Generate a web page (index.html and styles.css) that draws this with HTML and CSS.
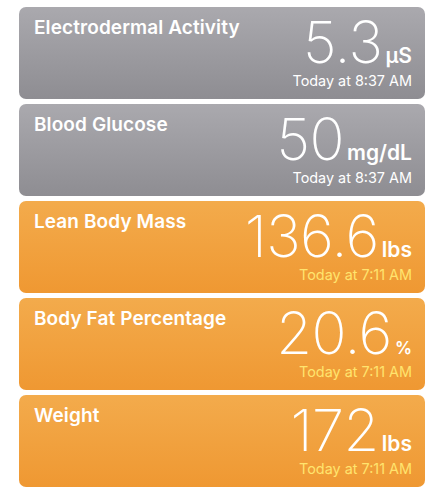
FILE: index.html
```html
<!DOCTYPE html>
<html>
<head lang="en">
    <meta charset="UTF-8">
    <title>Health</title>
    <link rel="stylesheet" href="styles.css">
</head>
<body>
<div class="list">
    <!-- gray cards -->
    <div class="card gray">
        <div class="title">Electrodermal Activity</div>
        <div class="data">
            <div class="value"><span class="num">5.3</span><span class="unit">µS</span></div>
            <div class="date">Today at 8:37 AM</div>
        </div>
    </div>
    <div class="card gray">
        <div class="title">Blood Glucose</div>
        <div class="data">
            <div class="value"><span class="num">50</span><span class="unit">mg/dL</span></div>
            <div class="date">Today at 8:37 AM</div>
        </div>
    </div>
    <!-- orange cards -->
    <div class="card orange">
        <div class="title">Lean Body Mass</div>
        <div class="data">
            <div class="value"><span class="num">136.6</span><span class="unit">lbs</span></div>
            <div class="date">Today at 7:11 AM</div>
        </div>
    </div>
    <div class="card orange">
        <div class="title">Body Fat Percentage</div>
        <div class="data">
            <div class="value"><span class="num">20.6</span><span class="unit pct">%</span></div>
            <div class="date">Today at 7:11 AM</div>
        </div>
    </div>
    <div class="card orange">
        <div class="title">Weight</div>
        <div class="data">
            <div class="value"><span class="num">172</span><span class="unit">lbs</span></div>
            <div class="date">Today at 7:11 AM</div>
        </div>
    </div>
</div>
</body>
</html>
```

FILE: styles.css
```css
*{ margin:0; padding:0; box-sizing:border-box; }
body{ background:#fff; font-family: Inter, "Noto Sans", sans-serif; color:#fff; }
.list{ display:flex; flex-direction:column; gap:5px; padding:7px 19px 0 19px; }
.card{ height:92px; border-radius:7px; display:flex; justify-content:space-between; padding:10px 13px 0 15px; }
.gray{ background:linear-gradient(#aaa9ae, #8e8d92); }
.orange{ background:linear-gradient(#f3ab4c, #ef9832); }
.title{ font-size:19px; font-weight:600; line-height:22px; letter-spacing:0.1px; }
.data{ display:flex; flex-direction:column; align-items:flex-end; }
.value{ display:flex; align-items:baseline; height:51px; }
.num{ font-size:58px; font-weight:200; letter-spacing:-0.5px; line-height:51px; }
.unit{ font-size:21px; font-weight:600; margin-left:3px; line-height:24px; }
.pct{ font-size:17px; }
.date{ font-size:14.4px; line-height:18px; margin-top:4px; }
.orange .date{ color:#ffe46e; }
```
